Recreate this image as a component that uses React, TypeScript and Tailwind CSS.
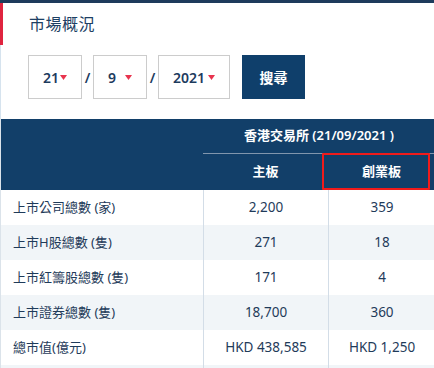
import { ReactNode } from 'react';

const rows = [
  { label: '上市公司總數 (家)', main: '2,200', gem: '359' },
  { label: '上市H股總數 (隻)', main: '271', gem: '18' },
  { label: '上市紅籌股總數 (隻)', main: '171', gem: '4' },
  { label: '上市證券總數 (隻)', main: '18,700', gem: '360' },
  { label: '總市值(億元)', main: 'HKD 438,585', gem: 'HKD 1,250' },
  { label: '', main: '', gem: '' },
];

const Caret = () => (
  <svg width="7" height="5" viewBox="0 0 7 5" className="shrink-0">
    <path d="M0 0 H7 L3.5 5 Z" fill="#e8344e" />
  </svg>
);

const DateSelect = ({ value, width }: { value: string; width: string }) => (
  <div className={`flex h-[44px] items-center justify-between border border-[#cccccc] px-[14px] ${width}`}>
    <span className="text-[14px] font-semibold text-[#1d3b5e]">{value}</span>
    <Caret />
  </div>
);

const Slash = () => <span className="w-[11px] text-center text-[14px] font-semibold text-[#1d3b5e]">/</span>;

const Cell = ({ children, className = '' }: { children?: ReactNode; className?: string }) => (
  <div className={`flex h-[35px] items-center ${className}`}>{children}</div>
);

const App = () => {
  return (
    <div
      className="h-[368px] w-[434px] overflow-hidden bg-white"
      style={{ fontFamily: '"Noto Sans", "Noto Sans CJK TC", sans-serif' }}
    >
      <div className="h-[3px] bg-[#1e3b5c]" />

      {/* Title */}
      <div className="flex h-[42px] items-center border-l-[3px] border-[#e0243f] pl-[26px]">
        <h2 className="text-[16px] tracking-[0.5px] text-[#1d3f64]">市場概況</h2>
      </div>

      {/* Date picker */}
      <div className="flex items-center border-l border-[#d6e3ee] pb-[20px] pl-[27px] pt-[10px]">
        <DateSelect value="21" width="w-[54px]" />
        <Slash />
        <DateSelect value="9" width="w-[54px]" />
        <Slash />
        <DateSelect value="2021" width="w-[72px]" />
        <button className="ml-[12px] h-[44px] w-[63px] bg-[#0f3f6b] text-[14px] font-semibold text-white">搜尋</button>
      </div>

      {/* Table */}
      <div className="relative border-l border-[#dbe3ea]">
        <div className="grid grid-cols-[202px_125px_107px] bg-[#123f69] text-[13px] font-semibold text-white">
          <div className="row-span-2" />
          <div className="col-span-2 flex h-[35px] items-center justify-center border-b border-[#8196ad]">
            香港交易所 (21/09/2021 )
          </div>
          <div className="flex h-[36px] items-center justify-center">主板</div>
          <div className="flex h-[36px] items-center justify-center">創業板</div>
        </div>
        <div className="pointer-events-none absolute left-[321px] top-[34px] h-[37px] w-[108px] rounded-[1px] border-[2.5px] border-[#f11b1b]" />

        {rows.map((r, i) => (
          <div
            key={i}
            className={`grid grid-cols-[202px_125px_107px] text-[#1f3b5a] ${i % 2 === 1 ? 'bg-[#f1f5f8]' : 'bg-white'}`}
          >
            <Cell className="pl-[12px] text-[13px]">{r.label}</Cell>
            <Cell className="justify-center border-l border-[#d3dde7] text-[13.5px]">{r.main}</Cell>
            <Cell className="justify-center border-l border-[#d3dde7] text-[13.5px]">{r.gem}</Cell>
          </div>
        ))}
      </div>
    </div>
  );
};

export default App;
